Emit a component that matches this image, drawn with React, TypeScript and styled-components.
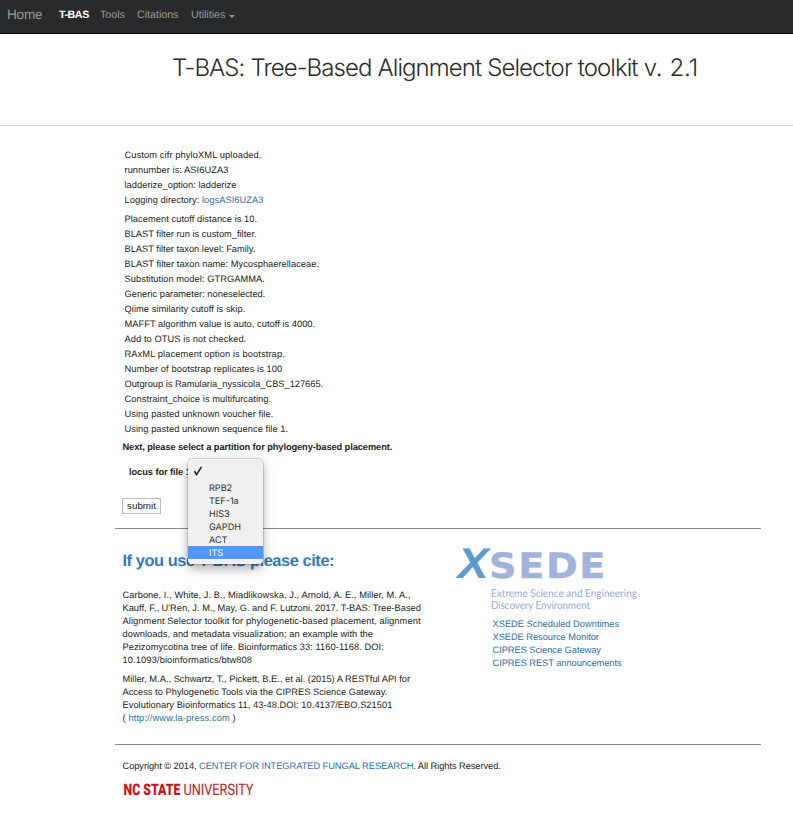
import React from 'react';
import styled, { createGlobalStyle } from 'styled-components';

const GlobalStyle = createGlobalStyle`
  * { box-sizing: border-box; }
  body {
    margin: 0;
    background: #fff;
    color: #222;
    font-family: "Liberation Sans", Arial, sans-serif;
    font-size: 9.3px;
    line-height: 13px;
    text-rendering: geometricPrecision;
  }
`;

const Page = styled.div`
  height: 814px;
  overflow: hidden;
`;

const Navbar = styled.nav`
  display: flex;
  align-items: flex-start;
  height: 34px;
  padding: 8px 0 0 7px;
  background: #292a2b;
  border-bottom: 1px solid #080808;
  color: #999;
`;

const Brand = styled.a`
  width: 52px;
  font-size: 13.6px;
  line-height: 14px;
  letter-spacing: -0.2px;
`;

const NavItem = styled.a<{ $width: number; $active?: boolean }>`
  display: flex;
  align-items: center;
  gap: 4px;
  width: ${(p) => p.$width}px;
  font-size: 10.7px;
  line-height: 14px;
  white-space: nowrap;
  letter-spacing: ${(p) => (p.$active ? '-0.45px' : '-0.02px')};
  font-weight: ${(p) => (p.$active ? 700 : 400)};
  color: ${(p) => (p.$active ? '#fff' : '#999')};
`;

const Caret = styled.span`
  margin-top: 2px;
  border: 3.5px solid transparent;
  border-top-color: currentColor;
  border-bottom: 0;
`;

const Header = styled.header`
  height: 92px;
  padding: 17px 0 0 172px;
  border-bottom: 1px solid #ddd;
`;

const Title = styled.h1`
  margin: 0;
  font-family: Inter, "Liberation Sans", sans-serif;
  font-size: 24px;
  font-weight: 300;
  line-height: 34px;
  letter-spacing: -0.94px;
  word-spacing: 0.3px;
  white-space: nowrap;
  color: #2b2b2b;
`;

const Version = styled.span`
  letter-spacing: -0.1px;
`;

const Main = styled.main`
  width: 646px;
  margin: 22px 0 0 115px;
`;

const Log = styled.div`
  padding-left: 9.5px;
  margin-bottom: 4px;
`;

const Line = styled.div<{ $ls?: number; $height?: number }>`
  height: ${(p) => p.$height ?? 15}px;
  line-height: ${(p) => p.$height ?? 15}px;
  letter-spacing: ${(p) => p.$ls ?? 0.05}px;
  white-space: nowrap;
`;

const Link = styled.a`
  color: #2a6eae;
`;

const Prompt = styled.div`
  padding-left: 7.5px;
  font-weight: 700;
  letter-spacing: -0.1px;
`;

const Field = styled.div`
  position: relative;
  height: 13px;
  margin: 12px 0 0 14px;
  font-weight: 700;
  letter-spacing: -0.08px;
`;

const Menu = styled.ul`
  position: absolute;
  z-index: 2;
  top: -7px;
  left: 59px;
  width: 75px;
  height: 105px;
  margin: 0;
  padding: 4px 0;
  list-style: none;
  background: #f0f0f0;
  border-radius: 4px;
  box-shadow: 0 0 0 0.5px rgba(0, 0, 0, 0.25), 0 4px 11px rgba(0, 0, 0, 0.35);
  font-family: Inter, "Liberation Sans", sans-serif;
  font-size: 9.1px;
  font-weight: 400;
  letter-spacing: 0;
`;

const Option = styled.li<{ $selected?: boolean }>`
  height: 13px;
  padding: 1px 0 0 21px;
  line-height: 13px;
  color: ${(p) => (p.$selected ? '#fff' : '#2b2b2b')};
  background: ${(p) => (p.$selected ? '#5097fd' : 'transparent')};
`;

const EmptyOption = styled.li`
  height: 18px;
  padding-left: 5px;
`;

const Submit = styled.button`
  display: block;
  width: 39px;
  height: 16px;
  margin: 19px 0 14px 7px;
  padding: 0;
  border: 1px solid #bbb;
  border-radius: 0;
  background: #fff;
  color: #222;
  font: 9.8px/12px "Liberation Sans", Arial, sans-serif;
`;

const Rule = styled.hr`
  height: 1px;
  margin: 0;
  border: 0;
  background: #888;
`;

const Columns = styled.section`
  display: grid;
  grid-template-columns: 341px 1fr;
  height: 215px;
`;

const Citations = styled.div`
  padding: 22px 0 0 7.5px;
`;

const Heading = styled.h2`
  margin: 0 0 18px;
  font-size: 16.4px;
  line-height: 20px;
  letter-spacing: -0.43px;
  color: #337ab7;
  white-space: nowrap;
`;

const Paragraph = styled.div`
  margin-bottom: 6px;
`;

const Partner = styled.div`
  padding-top: 16px;
`;

const PartnerLinks = styled.div`
  padding: 3px 0 0 36.5px;
`;

const Svg = styled.svg`
  display: block;
`;

const Footer = styled.footer`
  display: grid;
  gap: 6px;
  padding: 15px 0 0 7.5px;
`;

type Row = [string, number?];

const configLines: Row[] = [
  ['Placement cutoff distance is 10.'],
  ['BLAST filter run is custom_filter.', 0],
  ['BLAST filter taxon level: Family.', 0],
  ['BLAST filter taxon name: Mycosphaerellaceae.', 0.02],
  ['Substitution model: GTRGAMMA.'],
  ['Generic parameter: noneselected.', 0.01],
  ['Qiime similarity cutoff is skip.'],
  ['MAFFT algorithm value is auto, cutoff is 4000.', 0.03],
  ['Add to OTUS is not checked.', 0.07],
  ['RAxML placement option is bootstrap.', 0.1],
  ['Number of bootstrap replicates is 100', 0.09],
  ['Outgroup is Ramularia_nyssicola_CBS_127665.', -0.02],
  ['Constraint_choice is multifurcating.', 0.07],
  ['Using pasted unknown voucher file.', 0.06],
  ['Using pasted unknown sequence file 1.', 0.05],
];

const carbone: Row[] = [
  ['Carbone, I., White, J. B., Miadlikowska, J., Arnold, A. E., Miller, M. A.,', 0.06],
  ["Kauff, F., U'Ren, J. M., May, G. and F. Lutzoni. 2017. T-BAS: Tree-Based", 0],
  ['Alignment Selector toolkit for phylogenetic-based placement, alignment', 0.08],
  ['downloads, and metadata visualization; an example with the'],
  ['Pezizomycotina tree of life. Bioinformatics 33: 1160-1168. DOI:', 0.06],
  ['10.1093/bioinformatics/btw808', 0.12],
];

const miller: Row[] = [
  ['Miller, M.A., Schwartz, T., Pickett, B.E., et al. (2015) A RESTful API for', 0],
  ['Access to Phylogenetic Tools via the CIPRES Science Gateway.', 0.01],
  ['Evolutionary Bioinformatics 11, 43-48.DOI: 10.4137/EBO.S21501', 0.03],
];

const partnerLinks: Row[] = [
  ['XSEDE Scheduled Downtimes', 0],
  ['XSEDE Resource Monitor', -0.05],
  ['CIPRES Science Gateway', -0.05],
  ['CIPRES REST announcements', -0.06],
];

const loci = ['RPB2', 'TEF-1a', 'HIS3', 'GAPDH', 'ACT', 'ITS'];

const XsedeLogo = () => (
  <Svg width="190" height="70" viewBox="0 0 190 70">
    <text x="1.5" y="32.5" fontFamily="Liberation Sans" fontWeight="700" fontStyle="italic" fontSize="43" fill="#5b9bd2" textLength="31" lengthAdjust="spacingAndGlyphs">X</text>
    <text x="33" y="32.7" fontFamily="DejaVu Sans" fontWeight="700" fontSize="35" fill="#9fb3dc" stroke="#9fb3dc" strokeWidth="0.4" letterSpacing="1.5" textLength="118" lengthAdjust="spacingAndGlyphs">SEDE</text>
    <g fontFamily="Lato" fontSize="10.8" fill="#94a9d3">
      <text x="35" y="52" textLength="146" lengthAdjust="spacingAndGlyphs">Extreme Science and Engineering</text>
      <text x="35" y="63.5" textLength="99" lengthAdjust="spacingAndGlyphs">Discovery Environment</text>
    </g>
  </Svg>
);

const NcStateLogo = () => (
  <Svg width="140" height="20" viewBox="0 0 140 20">
    <g fontFamily="Roboto, sans-serif" fontSize="16" fill="#cc1018">
      <text x="0.5" y="15.5" fontWeight="900" textLength="57" lengthAdjust="spacingAndGlyphs">NC STATE</text>
      <text x="60.5" y="15.5" fontWeight="400" textLength="70" lengthAdjust="spacingAndGlyphs">UNIVERSITY</text>
    </g>
  </Svg>
);

export default function App() {
  return (
    <Page>
      <GlobalStyle />
      <Navbar>
        <Brand>Home</Brand>
        <NavItem $width={41} $active>T-BAS</NavItem>
        <NavItem $width={37}>Tools</NavItem>
        <NavItem $width={54}>Citations</NavItem>
        <NavItem $width={50}>Utilities<Caret /></NavItem>
      </Navbar>
      <Header>
        <Title>T-BAS: Tree-Based Alignment Selector toolkit <Version>v. 2.1</Version></Title>
      </Header>
      <Main>
        <Log>
          <Line $ls={0.1}>Custom cifr phyloXML uploaded.</Line>
          <Line>runnumber is: ASI6UZA3</Line>
          <Line $ls={0.03}>ladderize_option: ladderize</Line>
          <Line>Logging directory: <Link>logsASI6UZA3</Link></Line>
        </Log>
        <Log>
          {configLines.map(([text, ls]) => <Line key={text} $ls={ls}>{text}</Line>)}
        </Log>
        <Prompt>Next, please select a partition for phylogeny-based placement.</Prompt>
        <Field>
          locus for file 1
          <Menu>
            <EmptyOption>
              <Svg width="10" height="14" viewBox="0 0 10 14">
                <path d="M1.4 8.2 L3.6 11.6 L8.4 3.8" fill="none" stroke="#222" strokeWidth="1.6" />
              </Svg>
            </EmptyOption>
            {loci.map((name) => <Option key={name} $selected={name === 'ITS'}>{name}</Option>)}
          </Menu>
        </Field>
        <Submit>submit</Submit>
        <Rule />
        <Columns>
          <Citations>
            <Heading>If you use T-BAS please cite:</Heading>
            <Paragraph>
              {carbone.map(([text, ls]) => <Line key={text} $height={13} $ls={ls}>{text}</Line>)}
            </Paragraph>
            <Paragraph>
              {miller.map(([text, ls]) => <Line key={text} $height={13} $ls={ls}>{text}</Line>)}
              <Line $height={13} $ls={0.12}>( <Link>http://www.la-press.com</Link> )</Line>
            </Paragraph>
          </Citations>
          <Partner>
            <XsedeLogo />
            <PartnerLinks>
              {partnerLinks.map(([text, ls]) => (
                <Line key={text} $height={13} $ls={ls}><Link>{text}</Link></Line>
              ))}
            </PartnerLinks>
          </Partner>
        </Columns>
        <Rule />
        <Footer>
          <Line $height={13} $ls={-0.06}>
            Copyright © 2014, <Link>CENTER FOR INTEGRATED FUNGAL RESEARCH</Link>. All Rights Reserved.
          </Line>
          <NcStateLogo />
        </Footer>
      </Main>
    </Page>
  );
}
